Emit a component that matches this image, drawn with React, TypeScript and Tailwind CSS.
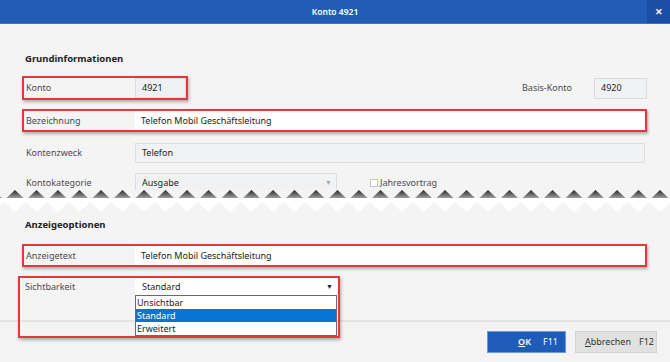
import React from "react";

type RowProps = {
  label: string;
  red?: boolean;
  children: React.ReactNode;
};

function Row({ label, red, children }: RowProps) {
  return (
    <div
      className={
        red
          ? "flex items-center border-2 border-[#e5373c] pl-[2px] shadow-[1px_2px_3px_rgba(0,0,0,0.3)]"
          : "flex items-center border-2 border-transparent pl-[2px]"
      }
    >
      <div className="w-[109px] shrink-0 text-[#4b4b4b]">{label}</div>
      {children}
    </div>
  );
}

function TornEdge() {
  const period = 21.5;
  const start = 15 - period * 1;
  const peaks = Array.from({ length: 34 }, (_, i) => start + i * period);
  const white =
    "0,8 670,8 " +
    peaks
      .slice()
      .reverse()
      .map((p) => `${p + period / 2},12 ${p},22`)
      .join(" ");
  return (
    <svg width="670" height="22" viewBox="0 0 670 22" className="block shrink-0">
      <defs>
        <linearGradient id="tear" x1="0" y1="0" x2="0" y2="1">
          <stop offset="0" stopColor="#262626" />
          <stop offset="1" stopColor="#a5a5a5" />
        </linearGradient>
      </defs>
      {peaks.map((p) => (
        <polygon key={p} points={`${p - 9},8.5 ${p},0 ${p + 9},8.5`} fill="url(#tear)" />
      ))}
      <polygon points={white} fill="#ffffff" />
    </svg>
  );
}

export default function App() {
  return (
    <div className="w-[670px] h-[362px] bg-[#f4f4f4] flex flex-col overflow-hidden font-['Noto_Sans','Open_Sans',sans-serif] text-[9px] leading-[14px] text-[#222]">
      {/* Title bar */}
      <div className="h-[24px] shrink-0 bg-[#225cb7] border-b border-[#3d72c4] flex items-center relative">
        <div className="flex-1 text-center text-white font-semibold text-[8.5px]">Konto 4921</div>
        <div className="absolute right-0 top-0 h-[23px] w-[23px] bg-[#1b4ea5] flex items-center justify-center text-white font-bold text-[9px]">
          ✕
        </div>
      </div>

      {/* Grundinformationen */}
      <div className="pl-[22px] pr-[23px] flex flex-col">
        <div className="mt-[28px] pl-[3px] font-bold text-[9.5px] text-[#222]">Grundinformationen</div>

        <div className="mt-[10px] flex items-center">
          <Row label="Konto" red>
            <div className="w-[51px] h-[20px] bg-[#eef0f3] border border-[#dadcdf] flex items-center pl-[6px]">4921</div>
          </Row>
          <div className="ml-auto flex items-center">
            <span className="text-[#4b4b4b] mr-[22px]">Basis-Konto</span>
            <div className="w-[53px] h-[21px] bg-[#f0f2f4] border border-[#d8dadd] flex items-center pl-[6px]">4920</div>
          </div>
        </div>

        <div className="mt-[9px]">
          <Row label="Bezeichnung" red>
            <div className="flex-1 h-[19px] bg-white flex items-center pl-[6px]">Telefon Mobil Geschäftsleitung</div>
          </Row>
        </div>

        <div className="mt-[9px]">
          <Row label="Kontenzweck">
            <div className="flex-1 h-[20px] bg-[#f1f2f4] border border-[#dcdee1] flex items-center pl-[6px]">Telefon</div>
          </Row>
        </div>

        <div className="mt-[6px] h-[19px] overflow-hidden">
          <Row label="Kontokategorie">
            <div className="w-[202px] h-[20px] bg-[#f1f2f4] border border-[#dcdee1] flex items-center pl-[6px] pr-[4px]">
              <span className="flex-1">Ausgabe</span>
              <span className="text-[#a8a8a8] text-[7px]">▼</span>
            </div>
            <div className="ml-[33px] flex items-center">
              <span className="w-[8px] h-[8px] border border-[#c4c4c4] bg-white mr-[2px]" />
              <span className="text-[#4b4b4b]">Jahresvortrag</span>
            </div>
          </Row>
        </div>
      </div>

      <TornEdge />

      {/* Anzeigeoptionen */}
      <div className="pl-[22px] pr-[23px] flex flex-col">
        <div className="mt-[6px] pl-[3px] font-bold text-[9.5px] text-[#222]">Anzeigeoptionen</div>

        <div className="mt-[12px]">
          <Row label="Anzeigetext" red>
            <div className="flex-1 h-[19px] bg-white flex items-center pl-[6px]">Telefon Mobil Geschäftsleitung</div>
          </Row>
        </div>

        <div className="mt-[9px] ml-[-4px] w-[322px] h-[62px] border-2 border-[#e5373c] shadow-[1px_2px_3px_rgba(0,0,0,0.3)] pl-[5px] pr-[1px] pt-[1px] flex items-start relative z-10">
          <div className="w-[110px] shrink-0 text-[#4b4b4b] mt-[1px]">Sichtbarkeit</div>
          <div className="w-[202px] flex flex-col">
            <div className="h-[16px] bg-white flex items-center pl-[7px] pr-[4px]">
              <span className="flex-1">Standard</span>
              <span className="text-[#222] text-[7px]">▼</span>
            </div>
            <div className="border border-[#6a6a6a] bg-white flex flex-col">
              <div className="h-[13px] flex items-center pl-[1px]">Unsichtbar</div>
              <div className="h-[13px] flex items-center pl-[1px] bg-[#0a74d6] text-white">Standard</div>
              <div className="h-[13px] flex items-center pl-[1px]">Erweitert</div>
            </div>
          </div>
        </div>
      </div>

      {/* Footer */}
      <div className="mt-[-18px] flex-1 border-t-2 border-[#e3e3e3] bg-[#f3f3f3] flex justify-end items-start pt-[9px] pr-[13px] gap-[9px]">
        <div className="w-[79px] h-[22px] bg-[#1f5bb8] border border-[#6e98d6] flex items-center justify-end pr-[7px] gap-[12px] text-white">
          <span className="font-semibold">
            <span className="underline">O</span>K
          </span>
          <span>F11</span>
        </div>
        <div className="w-[82px] h-[22px] bg-[#e1e1e1] border border-[#d2d2d2] flex items-center pl-[9px] gap-[8px] text-[#333]">
          <span>
            <span className="underline">A</span>bbrechen
          </span>
          <span>F12</span>
        </div>
      </div>
    </div>
  );
}
